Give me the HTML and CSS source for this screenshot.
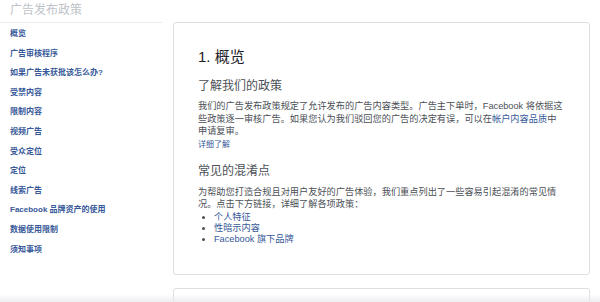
FILE: index.html
```html
<!DOCTYPE html>
<html lang="zh-CN">
<head>
    <meta charset="UTF-8">
    <meta name="viewport" content="width=device-width, initial-scale=1.0">
    <title>广告发布政策</title>
    <link rel="stylesheet" href="styles.css">
</head>
<body>
    <div class="page">
        <div class="sidebar">
            <div class="sidebar-title">广告发布政策</div>
            <ul class="nav">
                <li><a href="#">概览</a></li>
                <li><a href="#">广告审核程序</a></li>
                <li><a href="#">如果广告未获批该怎么办?</a></li>
                <li><a href="#">受禁内容</a></li>
                <li><a href="#">限制内容</a></li>
                <li><a href="#">视频广告</a></li>
                <li><a href="#">受众定位</a></li>
                <li><a href="#">定位</a></li>
                <li><a href="#">线索广告</a></li>
                <li><a href="#">Facebook 品牌资产的使用</a></li>
                <li><a href="#">数据使用限制</a></li>
                <li><a href="#">须知事项</a></li>
            </ul>
        </div>

        <div class="main">
            <div class="card">
                <h1>1. 概览</h1>
                <h2>了解我们的政策</h2>
                <p>我们的广告发布政策规定了允许发布的广告内容类型。广告主下单时，Facebook 将依据这些政策逐一审核广告。如果您认为我们驳回您的广告的决定有误，可以在<a href="#">帐户内容品质</a>中申请复审。</p>
                <a class="more" href="#">详细了解</a>

                <h2 class="second">常见的混淆点</h2>
                <p class="tight">为帮助您打造合规且对用户友好的广告体验，我们重点列出了一些容易引起混淆的常见情况。点击下方链接，详细了解各项政策：</p>
                <ul class="links">
                    <li><a href="#">个人特征</a></li>
                    <li><a href="#">性暗示内容</a></li>
                    <li><a href="#">Facebook 旗下品牌</a></li>
                </ul>
            </div>
            <div class="card card-next"></div>
        </div>
    </div>
    <div class="fade"></div>
</body>
</html>
```

FILE: styles.css
```css
/* 广告发布政策页面 */
html, body {
    margin: 0;
    height: 100%;
    overflow: hidden;
}
body {
    font-family: "Liberation Sans", "Noto Sans CJK SC", sans-serif;
    background: #fff;
    color: #1d2129;
}
a {
    color: #365899;
    text-decoration: none;
}
.page {
    display: flex;
    padding-right: 10px;
}
.sidebar {
    width: 162px;
    flex: none;
}
.sidebar-title {
    height: 22px;
    padding-left: 10px;
    border-bottom: 1px solid #e9ebee;
    font-size: 12px;
    line-height: 21px;
    color: #bec3c9;
}
.nav {
    list-style: none;
    margin: 0;
    padding: 1px 0 0 10px;
}
.nav li {
    font-size: 8px;
    line-height: 19.6px;
    font-weight: bold;
}
.nav a {
    color: #365899;
}
.main {
    flex: 1;
    margin-left: 11px;
    padding-top: 22px;
    display: flex;
    flex-direction: column;
    gap: 13px;
}
.card {
    background: #fff;
    border: 1px solid #dddfe2;
    border-radius: 3px;
    padding: 23px 26px 0 24px;
    height: 228px;
}
.card-next {
    height: 60px;
}
h1 {
    margin: 0;
    font-size: 15px;
    line-height: 22px;
    font-weight: normal;
    color: #1d2129;
}
h2 {
    margin: 10px 0 0;
    font-size: 12px;
    line-height: 16px;
    font-weight: normal;
    color: #4b4f56;
}
h2.second {
    margin-top: 12px;
}
p {
    margin: 6px 0 0;
    max-width: 366px;
    font-size: 9.2px;
    line-height: 12.5px;
    color: #4b4f56;
    text-spacing-trim: space-all;
    text-autospace: no-autospace;
}
p a {
    color: #365899;
}
p.tight {
    margin-top: 7px;
    line-height: 12px;
}
.more {
    display: block;
    margin-top: 1px;
    font-size: 8px;
    line-height: 12px;
}
.links {
    margin: 2px 0 0;
    padding-left: 16px;
    font-size: 9.2px;
    line-height: 11px;
    color: #4b4f56;
}
.fade {
    position: fixed;
    left: 0;
    right: 0;
    bottom: 0;
    height: 8px;
    background: linear-gradient(rgba(240, 241, 243, 0), rgba(235, 236, 238, 0.9));
}
```
